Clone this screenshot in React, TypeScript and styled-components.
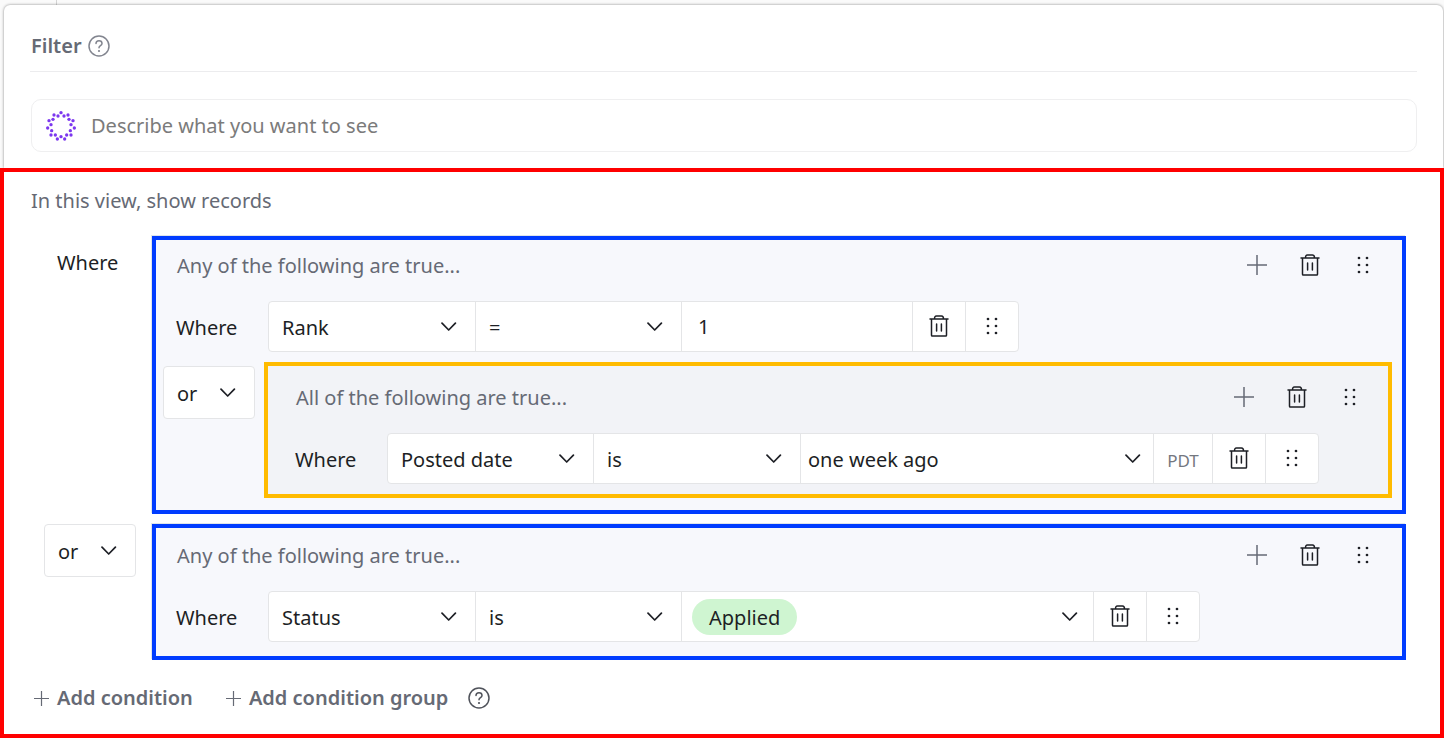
import React from "react";
import styled, { createGlobalStyle } from "styled-components";

const color = {
  ink: "#1d1f25",
  muted: "#666a75",
  line: "#e4e5e7",
  group: "#f7f8fc",
  nested: "#f2f3f7",
  red: "#ff0000",
  blue: "#003cff",
  amber: "#ffbb00",
};

const GlobalStyle = createGlobalStyle`
  *, *::before, *::after { box-sizing: border-box; }
  body {
    margin: 0;
    background: #fafafa;
    color: ${color.ink};
    font: 400 20px/30px "Noto Sans", "Open Sans", sans-serif;
  }
  button, input, select { font: inherit; color: inherit; margin: 0; }
`;

const Page = styled.main`
  display: flex;
  flex-direction: column;
`;

const Backdrop = styled.div`
  height: 5px;
  width: 57px;
  border-right: 1px solid #d4d4d4;
`;

const Panel = styled.header`
  margin: 0 1px 0 4px;
  padding: 16px 26px;
  background: #fff;
  border-radius: 6px 6px 0 0;
  box-shadow: 0 0 3px rgba(0, 0, 0, 0.45);
`;

const TitleBar = styled.div`
  display: flex;
  align-items: center;
  gap: 6px;
  height: 51px;
  padding: 0 0 1px 1px;
  border-bottom: 1px solid #ececee;
`;

const Title = styled.h1`
  margin: 0;
  font-size: 20px;
  font-weight: 600;
  color: ${color.muted};
`;

const HelpButton = styled.button`
  display: flex;
  padding: 0;
  border: 0;
  background: none;
  color: ${(p) => p.color};
`;

const Prompt = styled.label`
  display: flex;
  align-items: center;
  gap: 15px;
  height: 53px;
  margin: 27px 0 0 1px;
  padding: 0 14px;
  border: 1px solid #efeff0;
  border-radius: 10px;
`;

const PromptInput = styled.input`
  flex: 1;
  min-width: 0;
  padding: 0;
  border: 0;
  outline: 0;
  background: none;
  &::placeholder { color: #7b7b7b; opacity: 1; }
`;

const Conditions = styled.section`
  padding: 14px 34px 21px 27px;
  background: #fff;
  border: 4px solid ${color.red};
`;

const Intro = styled.p`
  margin: 0 0 20px;
  color: ${color.muted};
`;

const Stack = styled.div`
  display: flex;
  flex-direction: column;
  gap: 10px;
`;

const Row = styled.div<{ $lead: number; $right?: number }>`
  display: grid;
  grid-template-columns: ${(p) => p.$lead}px minmax(0, 1fr);
  padding-right: ${(p) => p.$right ?? 0}px;
`;

const Where = styled.span<{ $indent: number }>`
  padding: 2px 0 0 ${(p) => p.$indent}px;
  line-height: 49px;
`;

const Joiner = styled.div<{ $indent: number; $top?: number }>`
  padding: ${(p) => p.$top ?? 0}px 0 0 ${(p) => p.$indent}px;
`;

const JoinerBox = styled.div`
  display: flex;
  width: 92px;
  height: 53px;
  background: #fff;
  border: 1px solid ${color.line};
  border-radius: 4px;
`;

const Group = styled.div<{ $tone: "blue" | "amber"; $pad: string }>`
  padding: ${(p) => p.$pad};
  border: 4px solid ${(p) => color[p.$tone]};
  background: ${(p) => (p.$tone === "blue" ? color.group : color.nested)};
  box-shadow: ${(p) => (p.$tone === "blue" ? "-1px -1px 0 #dfe5ea" : "none")};
`;

const GroupHead = styled.div<{ $nested?: boolean }>`
  display: flex;
  align-items: center;
  height: 51px;
  margin-bottom: 10px;
  padding: ${(p) => (p.$nested ? "0 12px 0 28px" : "0 13px 0 21px")};
  color: ${color.muted};
`;

const GroupTitle = styled.span`
  flex: 1;
`;

const IconButton = styled.button`
  display: flex;
  align-items: center;
  justify-content: center;
  width: 53px;
  height: 49px;
  padding: 0 0 2px;
  border: 0;
  background: none;
  color: ${color.ink};
`;

const Bar = styled.div`
  display: flex;
  width: max-content;
  height: 51px;
  margin-left: 4px;
  background: #fff;
  border: 1px solid ${color.line};
  border-radius: 4px;
  && > * + * { border-left: 1px solid ${color.line}; }
`;

const Field = styled.div<{ $width?: number; $end?: number }>`
  display: grid;
  align-items: center;
  width: ${(p) => (p.$width ? p.$width + "px" : "100%")};
  & > * { grid-area: 1 / 1; }
  & > svg {
    justify-self: end;
    margin-right: ${(p) => p.$end ?? 18}px;
    pointer-events: none;
  }
`;

const Select = styled.select<{ $left?: number }>`
  appearance: none;
  width: 100%;
  height: 100%;
  padding: 2px 40px 0 ${(p) => p.$left ?? 13}px;
  border: 0;
  background: none;
`;

const ValueInput = styled.input`
  width: 231px;
  padding: 0 16px;
  border: 0;
  background: none;
`;

const Zone = styled.span`
  width: 59px;
  padding-top: 2px;
  text-align: center;
  font-size: 17px;
  line-height: 49px;
  color: #74777f;
`;

const TagButton = styled.button`
  display: flex;
  align-items: center;
  width: 100%;
  height: 100%;
  padding: 0 10px;
  border: 0;
  background: none;
`;

const Tag = styled.span`
  height: 36px;
  padding: 0 17px;
  border-radius: 18px;
  background: #cff5d1;
  line-height: 38px;
`;

const Footer = styled.footer`
  display: flex;
  align-items: center;
  gap: 30px;
  margin-top: 23px;
`;

const AddButton = styled.button`
  display: flex;
  align-items: center;
  gap: 8px;
  padding: 0 0 0 3px;
  border: 0;
  background: none;
  font-weight: 600;
  color: ${color.muted};
`;

const AddGroup = styled.div`
  display: flex;
  align-items: center;
  gap: 20px;
`;

const ChevronIcon = () => (
  <svg width="16" height="10" viewBox="0 0 16 10" fill="none" stroke={color.ink} strokeWidth="1.7" strokeLinecap="round" strokeLinejoin="round">
    <path d="M1 1.200 7.700 8l6.700-6.800" />
  </svg>
);

const PlusIcon = ({ size = 20, weight = 1.5 }: { size?: number; weight?: number }) => (
  <svg width={size} height={size} viewBox={`0 0 ${size} ${size}`} stroke={color.muted} strokeWidth={weight}>
    <path d={`M${size / 2} 0V${size}M0 ${size / 2}H${size}`} />
  </svg>
);

const TrashIcon = () => (
  <svg width="20" height="22" viewBox="0 0 20 22" fill="none" stroke="currentColor" strokeWidth="1.5" strokeLinecap="round" strokeLinejoin="round">
    <path d="M1 4h18M5.500 4C5.500 1.800 6.200 1 7.500 1h5C13.800 1 14.500 1.800 14.500 4M2.500 4v16.200c0 .5.3.8.8.8h13.400c.5 0 .8-.3.8-.8V4M7.600 9v7M12.400 9v7" />
  </svg>
);

const GripIcon = () => (
  <svg width="12" height="18" viewBox="0 0 12 18" fill="currentColor">
    {[2, 9, 16].map((y) => (
      <React.Fragment key={y}>
        <circle cx="2" cy={y} r="1.350" />
        <circle cx="10" cy={y} r="1.350" />
      </React.Fragment>
    ))}
  </svg>
);

const HelpIcon = () => (
  <svg width="22" height="22" viewBox="0 0 22 22" fill="none" stroke="currentColor" strokeWidth="1.500" strokeLinecap="round">
    <circle cx="11" cy="11" r="10" />
    <path d="M8 8.500C8 6.700 9.300 5.700 11 5.700s3 1.100 3 2.700c0 2.300-3 2.200-3 4.400" />
    <circle cx="11" cy="16" r="1.100" fill="currentColor" stroke="none" />
  </svg>
);

const sparkDots = [
  [45, 5], [24, 12], [66, 12], [36, 15], [54, 15], [21, 25], [69, 25], [9, 29],
  [81, 29], [15, 41], [75, 41], [5, 51], [85, 51], [17, 59], [73, 59], [15, 72],
  [75, 72], [28, 72], [62, 72], [45, 77], [34, 84], [56, 84],
];

const SparkIcon = () => (
  <svg width="30" height="30" viewBox="0 0 90 90" fill="#7c37ef">
    {sparkDots.map(([x, y]) => (
      <circle key={`${x}-${y}`} cx={x} cy={y} r="5" />
    ))}
  </svg>
);

type DropdownProps = { label: string; value: string; width?: number; left?: number; end?: number };

const Dropdown = ({ label, value, width, left, end }: DropdownProps) => (
  <Field $width={width} $end={end}>
    <Select aria-label={label} defaultValue={value} $left={left}>
      <option>{value}</option>
    </Select>
    <ChevronIcon />
  </Field>
);

const RowActions = () => (
  <>
    <IconButton aria-label="Delete condition"><TrashIcon /></IconButton>
    <IconButton aria-label="Reorder condition"><GripIcon /></IconButton>
  </>
);

const GroupHeader = ({ children, nested }: { children: string; nested?: boolean }) => (
  <GroupHead $nested={nested}>
    <GroupTitle>{children}</GroupTitle>
    <IconButton aria-label="Add to group"><PlusIcon /></IconButton>
    <IconButton aria-label="Delete group"><TrashIcon /></IconButton>
    <IconButton aria-label="Reorder group"><GripIcon /></IconButton>
  </GroupHead>
);

const OrSelect = () => (
  <JoinerBox>
    <Dropdown label="Conjunction" value="or" />
  </JoinerBox>
);

export default function App() {
  return (
    <Page>
      <GlobalStyle />
      <Backdrop />
      <Panel>
        <TitleBar>
          <Title>Filter</Title>
          <HelpButton color="#82858f" aria-label="About filters"><HelpIcon /></HelpButton>
        </TitleBar>
        <Prompt>
          <SparkIcon />
          <PromptInput aria-label="Describe what you want to see" placeholder="Describe what you want to see" />
        </Prompt>
      </Panel>

      <Conditions>
        <Intro>In this view, show records</Intro>
        <Stack>
          <Row $lead={121}>
            <Where $indent={26}>Where</Where>
            <Group $tone="blue" $pad="0 0 12px">
              <GroupHeader>Any of the following are true...</GroupHeader>
              <Stack>
                <Row $lead={108}>
                  <Where $indent={20}>Where</Where>
                  <Bar>
                    <Dropdown label="Field" value="Rank" width={206} />
                    <Dropdown label="Operator" value="=" width={206} />
                    <ValueInput aria-label="Value" defaultValue="1" />
                    <RowActions />
                  </Bar>
                </Row>
                <Row $lead={108} $right={10}>
                  <Joiner $indent={7} $top={4}><OrSelect /></Joiner>
                  <Group $tone="amber" $pad="6px 0 10px">
                    <GroupHeader nested>All of the following are true...</GroupHeader>
                    <Row $lead={115}>
                      <Where $indent={27}>Where</Where>
                      <Bar>
                        <Dropdown label="Field" value="Posted date" width={205} />
                        <Dropdown label="Operator" value="is" width={207} />
                        <Dropdown label="Value" value="one week ago" width={353} left={7} end={12} />
                        <Zone>PDT</Zone>
                        <RowActions />
                      </Bar>
                    </Row>
                  </Group>
                </Row>
              </Stack>
            </Group>
          </Row>

          <Row $lead={121}>
            <Joiner $indent={13}><OrSelect /></Joiner>
            <Group $tone="blue" $pad="2px 0 14px">
              <GroupHeader>Any of the following are true...</GroupHeader>
              <Row $lead={108}>
                <Where $indent={20}>Where</Where>
                <Bar>
                  <Dropdown label="Field" value="Status" width={206} />
                  <Dropdown label="Operator" value="is" width={206} />
                  <Field $width={412} $end={15}>
                    <TagButton aria-haspopup="listbox"><Tag>Applied</Tag></TagButton>
                    <ChevronIcon />
                  </Field>
                  <RowActions />
                </Bar>
              </Row>
            </Group>
          </Row>
        </Stack>

        <Footer>
          <AddButton><PlusIcon size={15} weight={1.2} />Add condition</AddButton>
          <AddGroup>
            <AddButton><PlusIcon size={15} weight={1.2} />Add condition group</AddButton>
            <HelpButton color="#50535b" aria-label="About condition groups"><HelpIcon /></HelpButton>
          </AddGroup>
        </Footer>
      </Conditions>
    </Page>
  );
}
